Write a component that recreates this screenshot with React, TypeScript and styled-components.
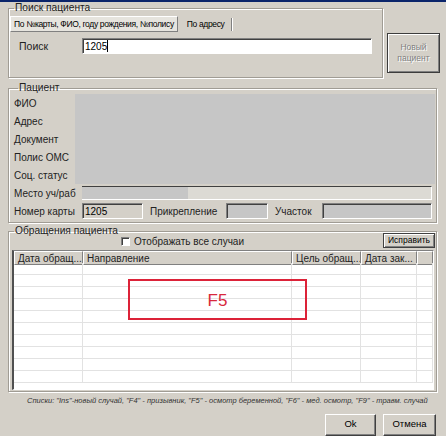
import styled, { createGlobalStyle } from 'styled-components'

const GlobalStyle = createGlobalStyle`
  body {
    margin: 0;
    background: #d4d0c8;
    font-family: 'Liberation Sans', Arial, sans-serif;
  }
`

const Window = styled.div`
  box-sizing: border-box;
  width: 446px;
  height: 436px;
  overflow: hidden;
  background: #d4d0c8;
  border-top: 2px solid #0a246a;
  font-size: 10px;
  color: #000;
  display: flex;
  flex-direction: column;
`

const TopRow = styled.div`
  display: flex;
  align-items: flex-start;
  gap: 4px;
  padding-left: 8px;
`

const Group = styled.fieldset<{ $w: number; $h: number; $pl?: number }>`
  box-sizing: border-box;
  width: ${p => p.$w}px;
  height: ${p => p.$h}px;
  margin: 0;
  padding: 0 1px 0 ${p => p.$pl ?? 1}px;
  min-width: 0;
  border: 1px solid #a09c94;
  box-shadow: 1px 1px 0 #fff, inset 1px 1px 0 #fff;
  display: flex;
  flex-direction: column;
`

const Legend = styled.legend`
  padding: 0 1px;
  margin-left: 4px;
  font-size: 10.2px;
  line-height: 12px;
  color: #222;
`

const Tabs = styled.div`
  display: flex;
  align-items: center;
  margin-top: 2px;
  height: 16px;
`

const Tab = styled.div<{ $active?: boolean }>`
  box-sizing: border-box;
  height: 16px;
  padding: 0 3px;
  display: flex;
  align-items: center;
  font-size: 8.5px;
  letter-spacing: -0.35px;
  white-space: nowrap;
  background: ${p => (p.$active ? '#e6e4de' : 'transparent')};
  border: 1px solid ${p => (p.$active ? '#808080' : 'transparent')};
  border-top-color: ${p => (p.$active ? '#fff' : 'transparent')};
  border-left-color: ${p => (p.$active ? '#fff' : 'transparent')};
  margin-right: ${p => (p.$active ? '5px' : '0')};
`

const TabSeparator = styled.div`
  width: 1px;
  height: 13px;
  background: #808080;
  border-right: 1px solid #fff;
  margin-left: 2px;
`

const SearchRow = styled.div`
  display: flex;
  align-items: center;
  margin-top: 6px;
`

const SearchLabel = styled.span`
  width: 63px;
  padding-left: 9px;
  font-size: 10.5px;
  color: #222;
`

const Input = styled.div<{ $w: number; $bg?: string }>`
  box-sizing: border-box;
  width: ${p => p.$w}px;
  height: 16px;
  padding: 0 2px;
  display: flex;
  align-items: center;
  font-size: 10px;
  background: ${p => p.$bg ?? '#fff'};
  border-top: 1px solid #808080;
  border-left: 1px solid #808080;
  border-right: 1px solid #fff;
  border-bottom: 1px solid #fff;
  box-shadow: inset 1px 1px 0 #404040;
`

const Caret = styled.span`
  display: inline-block;
  width: 1px;
  height: 12px;
  background: #000;
`

const NewPatientButton = styled.button`
  box-sizing: border-box;
  margin-top: 31px;
  width: 53px;
  height: 40px;
  padding: 0;
  background: #d4d0c8;
  border: 1px solid #3c3c3c;
  box-shadow: inset 1px 1px 0 #fff, inset -1px -1px 0 #808080;
  font-family: inherit;
  font-size: 8.5px;
  line-height: 11px;
  color: #808080;
  text-shadow: 1px 1px 0 #fff;
`

const PatientGroup = styled(Group)`
  margin: 4px 0 0 8px;
`

const MaskGrid = styled.div`
  display: grid;
  grid-template-columns: 61px 1fr;
  grid-auto-rows: 18px;
`

const FieldLabel = styled.span`
  display: flex;
  align-items: center;
  font-size: 10px;
  color: #222;
  white-space: nowrap;
`

const Masked = styled.div`
  grid-column: 2;
  grid-row: 1 / span 5;
  background: #c6c6c6;
`

const FieldRow = styled.div`
  display: flex;
  align-items: center;
  height: 18px;
`

const WorkField = styled.div`
  box-sizing: border-box;
  flex: 1;
  margin: 0 3px 0 6px;
  height: 14px;
  display: flex;
  border-top: 1px solid #404040;
  border-right: 1px solid #fff;
  border-bottom: 1px solid #fff;
  background: #dcdad4;
`

const WorkFill = styled.div`
  width: 106px;
  background: #c6c6c6;
`

const InlineLabel = styled.span<{ $w: number }>`
  width: ${p => p.$w}px;
  padding-left: 7px;
  box-sizing: border-box;
  font-size: 10px;
  color: #222;
  white-space: nowrap;
`

const CardLabel = styled.span`
  width: 68px;
  font-size: 10px;
  color: #222;
  white-space: nowrap;
`

const AppealsGroup = styled(Group)`
  margin: 2px 0 0 8px;
`

const Toolbar = styled.div`
  display: flex;
  align-items: center;
  height: 16px;
  margin-top: -5px;
  padding-left: 111px;
`

const CheckRow = styled.label`
  display: flex;
  align-items: center;
  gap: 4px;
  font-size: 10px;
  color: #222;
  margin-top: 3px;
`

const CheckBox = styled.span`
  box-sizing: border-box;
  width: 9px;
  height: 9px;
  background: #fff;
  border-top: 1px solid #808080;
  border-left: 1px solid #808080;
  border-right: 1px solid #fff;
  border-bottom: 1px solid #fff;
  box-shadow: inset 1px 1px 0 #404040;
`

const SmallButton = styled.button`
  box-sizing: border-box;
  margin-left: auto;
  width: 52px;
  height: 15px;
  padding: 0;
  background: #d4d0c8;
  border: 1px solid #404040;
  box-shadow: inset 1px 1px 0 #fff, inset -1px -1px 0 #808080;
  font-family: inherit;
  font-size: 8.5px;
  color: #000;
`

const TableBox = styled.div`
  position: relative;
  box-sizing: border-box;
  width: 422px;
  height: 140px;
  margin: 2px 0 0 2px;
  overflow: hidden;
  background: #fff;
  border-top: 1px solid #808080;
  border-left: 2px solid #505050;
  border-right: 1px solid #fff;
  border-bottom: 1px solid #fff;
`

const Grid = styled.div`
  display: grid;
  grid-template-columns: 69px 209px 69px 56px 1fr;
  grid-auto-rows: 12px;
`

const HeadCell = styled.div`
  box-sizing: border-box;
  height: 14px;
  padding: 0 3px;
  display: flex;
  align-items: center;
  font-size: 10px;
  color: #222;
  white-space: nowrap;
  overflow: hidden;
  background: #d4d0c8;
  border-top: 1px solid #fff;
  border-left: 1px solid #fff;
  border-right: 1px solid #808080;
  border-bottom: 1px solid #808080;
`

const Cell = styled.div`
  border-right: 1px solid #e2e2e2;
  border-bottom: 1px solid #e2e2e2;
`

const Annotation = styled.div`
  position: absolute;
  left: 114px;
  top: 28px;
  width: 179px;
  height: 41px;
  box-sizing: border-box;
  border: 2px solid #dc2238;
  display: flex;
  align-items: center;
  justify-content: center;
  padding-top: 2px;
  font-size: 17px;
  color: #d8283c;
`

const Hint = styled.div`
  margin-top: 3px;
  padding-left: 27px;
  height: 12px;
  font-size: 7.5px;
  line-height: 12px;
  font-style: italic;
  color: #333;
  white-space: nowrap;
`

const Footer = styled.div`
  display: flex;
  justify-content: flex-end;
  gap: 7px;
  margin-top: 7px;
  padding-right: 10px;
`

const DialogButton = styled.button<{ $w: number }>`
  box-sizing: border-box;
  width: ${p => p.$w}px;
  height: 22px;
  padding: 0 0 3px;
  background: #d4d0c8;
  border: 1px solid #404040;
  border-top-color: #fff;
  border-left-color: #fff;
  box-shadow: inset -1px -1px 0 #808080;
  font-family: inherit;
  font-size: 9.5px;
  color: #000;
`

const columns = ['Дата обращ...', 'Направление', 'Цель обращ...', 'Дата зак...', '']
const rows = Array.from({ length: 10 })

export default function App() {
  return (
    <Window>
      <GlobalStyle />
      <TopRow>
        <Group $w={375} $h={76}>
          <Legend>Поиск пациента</Legend>
          <Tabs>
            <Tab $active>По №карты, ФИО, году рождения, №полису</Tab>
            <Tab>По адресу</Tab>
            <TabSeparator />
          </Tabs>
          <SearchRow>
            <SearchLabel>Поиск</SearchLabel>
            <Input $w={290}>
              1205<Caret />
            </Input>
          </SearchRow>
        </Group>
        <NewPatientButton>
          Новый
          <br />
          пациент
        </NewPatientButton>
      </TopRow>

      <PatientGroup $w={429} $h={143} $pl={5}>
        <Legend>Пациент</Legend>
        <MaskGrid>
          <FieldLabel>ФИО</FieldLabel>
          <Masked />
          <FieldLabel>Адрес</FieldLabel>
          <FieldLabel>Документ</FieldLabel>
          <FieldLabel>Полис ОМС</FieldLabel>
          <FieldLabel>Соц. статус</FieldLabel>
        </MaskGrid>
        <FieldRow>
          <FieldLabel>Место уч/раб</FieldLabel>
          <WorkField>
            <WorkFill />
          </WorkField>
        </FieldRow>
        <FieldRow>
          <CardLabel>Номер карты</CardLabel>
          <Input $w={61} $bg="#d4d0c8">1205</Input>
          <InlineLabel $w={83}>Прикрепление</InlineLabel>
          <Input $w={42} $bg="#c6c6c6" />
          <InlineLabel $w={54}>Участок</InlineLabel>
          <Input $w={110} $bg="#c6c6c6" />
        </FieldRow>
      </PatientGroup>

      <AppealsGroup $w={429} $h={169}>
        <Legend>Обращения пациента</Legend>
        <Toolbar>
          <CheckRow>
            <CheckBox />
            Отображать все случаи
          </CheckRow>
          <SmallButton>Исправить</SmallButton>
        </Toolbar>
        <TableBox>
          <Grid>
            {columns.map((c, i) => (
              <HeadCell key={i}>{c}</HeadCell>
            ))}
            {rows.map((_, r) =>
              columns.map((_, c) => <Cell key={`${r}-${c}`} />)
            )}
          </Grid>
          <Annotation>F5</Annotation>
        </TableBox>
      </AppealsGroup>

      <Hint>
        Списки: "Ins"-новый случай, "F4" - призывник, "F5" - осмотр беременной, "F6" - мед. осмотр, "F9" - травм. случай
      </Hint>

      <Footer>
        <DialogButton $w={51}>Ok</DialogButton>
        <DialogButton $w={53}>Отмена</DialogButton>
      </Footer>
    </Window>
  )
}
